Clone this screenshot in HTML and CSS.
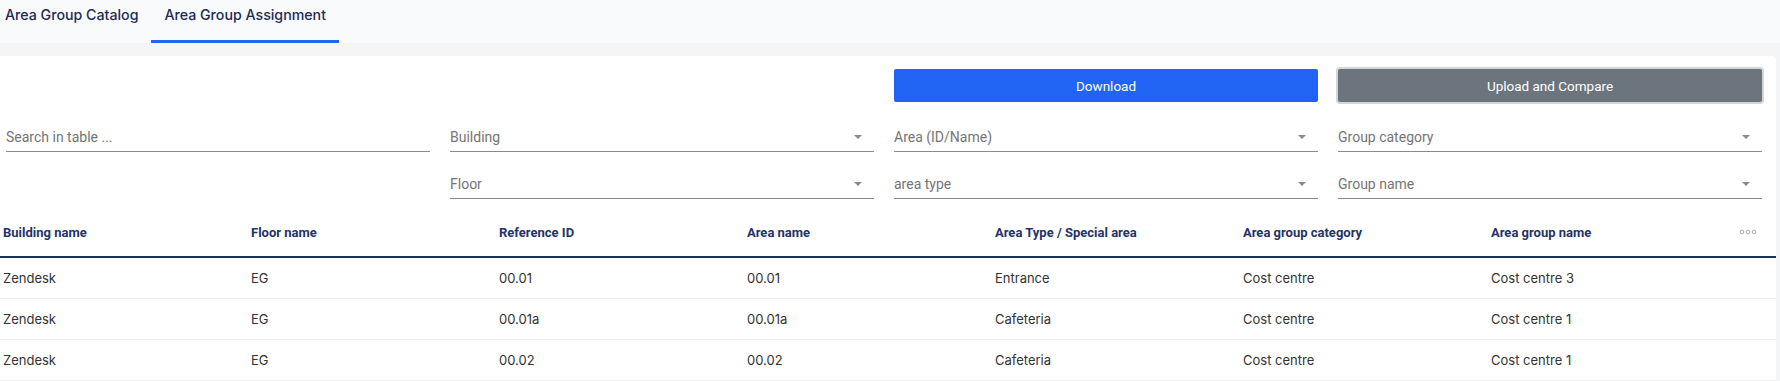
FILE: index.html
```html
<!DOCTYPE html>
<html lang="en">
<head>
<meta charset="UTF-8" />
<title>Area Group Assignment</title>
<link rel="stylesheet" href="styles.css">
</head>
<body>

<div class="tabs">
  <a class="tab">Area Group Catalog</a>
  <a class="tab active">Area Group Assignment</a>
</div>

<div class="card">
  <div class="grid actions">
    <span></span>
    <span></span>
    <button class="btn btn-primary">Download</button>
    <button class="btn btn-secondary">Upload and Compare</button>
  </div>

  <div class="grid filters">
    <div class="field"><span class="ph">Search in table ...</span></div>
    <div class="field select"><span class="ph">Building</span><i class="caret"></i></div>
    <div class="field select"><span class="ph">Area (ID/Name)</span><i class="caret"></i></div>
    <div class="field select"><span class="ph">Group category</span><i class="caret"></i></div>

    <span></span>
    <div class="field select"><span class="ph">Floor</span><i class="caret"></i></div>
    <div class="field select"><span class="ph">area type</span><i class="caret"></i></div>
    <div class="field select"><span class="ph">Group name</span><i class="caret"></i></div>
  </div>

  <table class="data">
    <thead>
      <tr>
        <th>Building name</th>
        <th>Floor name</th>
        <th>Reference ID</th>
        <th>Area name</th>
        <th>Area Type / Special area</th>
        <th>Area group category</th>
        <th>Area group name</th>
        <th class="more">
          <svg width="18" height="6" viewBox="0 0 18 6">
            <circle cx="3" cy="3" r="1.8" fill="none" stroke="#a5aab0" stroke-width="1"/>
            <circle cx="9" cy="3" r="1.8" fill="none" stroke="#a5aab0" stroke-width="1"/>
            <circle cx="15" cy="3" r="1.8" fill="none" stroke="#a5aab0" stroke-width="1"/>
          </svg>
        </th>
      </tr>
    </thead>
    <tbody>
      <tr><td>Zendesk</td><td>EG</td><td>00.01</td><td>00.01</td><td>Entrance</td><td>Cost centre</td><td>Cost centre 3</td><td></td></tr>
      <tr><td>Zendesk</td><td>EG</td><td>00.01a</td><td>00.01a</td><td>Cafeteria</td><td>Cost centre</td><td>Cost centre 1</td><td></td></tr>
      <tr><td>Zendesk</td><td>EG</td><td>00.02</td><td>00.02</td><td>Cafeteria</td><td>Cost centre</td><td>Cost centre 1</td><td></td></tr>
    </tbody>
  </table>
</div>

</body>
</html>
```

FILE: styles.css
```css
body { margin: 0; background: #f4f5f7; font-family: Inter, "Liberation Sans", sans-serif; color: #333; overflow: hidden; }

.tabs { display: flex; height: 43px; background: #f9fafc; }
.tab { display: block; padding: 6px 13px 0; font-size: 14.2px; font-weight: 500; color: #1b2b55; line-height: 18px; box-sizing: border-box; height: 43px; }
.tab:first-child { padding-left: 5px; }
.tab.active { border-bottom: 3px solid #2164f3; }

.card { margin: 13px 4px 0 0; background: #fff; border-radius: 0 4px 0 0; padding: 13px 0 40px; }

.grid { display: grid; grid-template-columns: repeat(4, 424px); column-gap: 20px; padding-left: 6px; }
.actions { height: 33px; }
.btn { font-family: Roboto, sans-serif; font-size: 13.5px; color: #fff; border: 0; border-radius: 2px; cursor: pointer; height: 33px; }
.btn-primary { background: #2164f3; }
.btn-secondary { background: #6c757d; box-shadow: 0 0 0 2px #d3d6d9; }

.filters { margin-top: 17px; row-gap: 14px; }
.field { height: 32px; border-bottom: 1px solid #8a8a8a; display: flex; align-items: center; justify-content: space-between; font-family: Roboto, sans-serif; font-size: 14px; }
.ph { color: #757575; padding-top: 3px; }
.caret { width: 0; height: 0; border-left: 4px solid transparent; border-right: 4px solid transparent; border-top: 4px solid #8a8a8a; margin: 4px 12px 0 0; }

.data { width: 100%; border-collapse: collapse; margin-top: 12px; table-layout: fixed; }
.data th, .data td { text-align: left; padding: 0 0 0 3px; width: 245px; }
.data th { height: 42px; padding-bottom: 3px; font-family: Roboto, sans-serif; font-size: 13px; font-weight: 700; color: #1f3468; border-bottom: 2px solid #1b2f5e; }
.data th.more, .data td:last-child { width: auto; }
.data th.more svg { display: block; }
.data td { height: 40px; font-size: 13px; color: #333; border-bottom: 1px solid #eceef0; }
```
